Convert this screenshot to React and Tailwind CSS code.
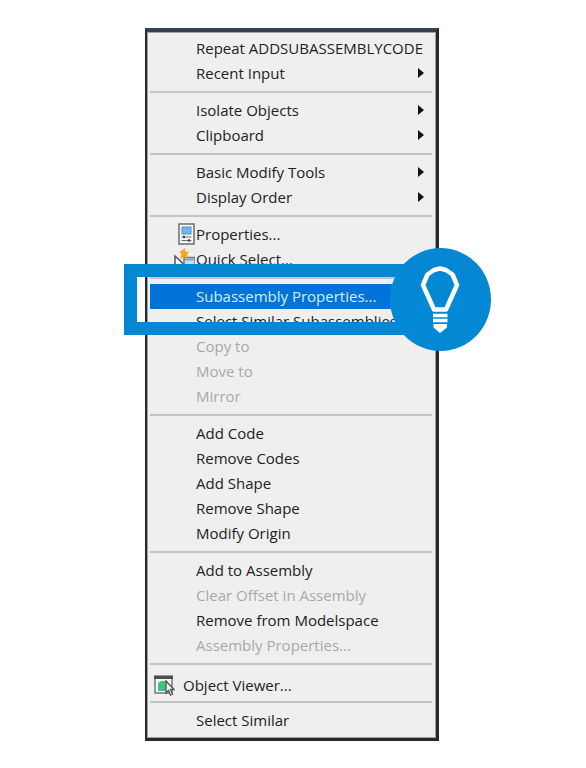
import React from 'react';

const groups = [
  [
    { label: 'Repeat ADDSUBASSEMBLYCODE' },
    { label: 'Recent Input', submenu: true },
  ],
  [
    { label: 'Isolate Objects', submenu: true },
    { label: 'Clipboard', submenu: true },
  ],
  [
    { label: 'Basic Modify Tools', submenu: true },
    { label: 'Display Order', submenu: true },
  ],
  [
    { label: 'Properties...', icon: 'properties' },
    { label: 'Quick Select...', icon: 'quick' },
  ],
  [
    { label: 'Subassembly Properties...', active: true },
    { label: 'Select Similar Subassemblies' },
    { label: 'Copy to', disabled: true },
    { label: 'Move to', disabled: true },
    { label: 'Mirror', disabled: true },
  ],
  [
    { label: 'Add Code' },
    { label: 'Remove Codes' },
    { label: 'Add Shape' },
    { label: 'Remove Shape' },
    { label: 'Modify Origin' },
  ],
  [
    { label: 'Add to Assembly' },
    { label: 'Clear Offset in Assembly', disabled: true },
    { label: 'Remove from Modelspace' },
    { label: 'Assembly Properties...', disabled: true },
  ],
  [{ label: 'Object Viewer...', icon: 'viewer', outdent: true }],
  [{ label: 'Select Similar' }],
];

const PropertiesIcon = () => (
  <svg width="17" height="22" viewBox="0 0 17 22" aria-hidden="true">
    <rect x="1" y="1" width="15" height="20" fill="#f8f8f8" stroke="#6c6c6c" strokeWidth="1.5" />
    <rect x="4" y="4" width="9" height="7" fill="#6db6f2" stroke="#4b8fcb" />
    <path d="M3.5 14h10M3.5 17.5h10" stroke="#666" />
    <path d="M6 12.8v2.4M11 16.3v2.4" stroke="#444" strokeWidth="2" />
  </svg>
);

const QuickSelectIcon = () => (
  <svg width="21" height="22" viewBox="0 0 21 22" aria-hidden="true">
    <path d="M1 20V8l9 8.5-4.5.5" fill="#fff" stroke="#555" strokeWidth="1.5" />
    <rect x="10" y="9.5" width="11" height="11" fill="#c5e0f5" stroke="#777" strokeWidth="1.5" />
    <path d="M11 11.5h9" stroke="#68aee8" strokeWidth="2" />
    <path d="M11 0L5.5 4l2 2.500-1.500 4.500 4-2 4 2-1-4.500 2.500-3-4 .5z" fill="#f8a51b" />
  </svg>
);

const ViewerIcon = () => (
  <svg width="21" height="21" viewBox="0 0 21 21" aria-hidden="true">
    <rect x="1" y="1" width="17" height="17" fill="#f7f7f7" stroke="#777" strokeWidth="1.5" />
    <path d="M0 2.5h19" stroke="#4e4e4e" strokeWidth="3" />
    <path d="M4 8l3-2h5v10H4z" fill="#3fc380" />
    <path d="M12 6v12l2.5-2.5 2 4.5 2-1-2-4.5h3.5z" fill="#f5f5f5" stroke="#555" strokeWidth="1.3" />
  </svg>
);

const icons = {
  properties: <PropertiesIcon />,
  quick: <QuickSelectIcon />,
  viewer: <ViewerIcon />,
};

const MenuItem = ({ item }) => {
  let color = 'text-[#222222]';
  if (item.disabled) color = 'text-[#a8a8a8]';
  if (item.active) color = 'bg-[#0073d9] text-[#d9ecff]';

  return (
    <li role="none">
      <button
        type="button"
        role="menuitem"
        disabled={item.disabled}
        aria-haspopup={item.submenu ? 'menu' : undefined}
        className={`flex w-full items-center text-left whitespace-nowrap ${item.outdent ? 'h-[26px] pt-1' : 'h-[25px] pb-[2px]'} ${color}`}
      >
        <span
          className={`flex shrink-0 items-center justify-end ${item.outdent ? 'w-[33px] pr-2' : 'w-[46px] pr-px'}`}
        >
          {icons[item.icon]}
        </span>
        <span className="flex-1">{item.label}</span>
        {item.submenu && (
          <svg className="mr-2" width="7" height="10" viewBox="0 0 7 10" aria-hidden="true">
            <path d="M1 0l6 5-6 5z" fill="#111" />
          </svg>
        )}
      </button>
    </li>
  );
};

const TipBadge = () => (
  <svg width="101" height="103" viewBox="0 0 101 103" aria-hidden="true">
    <ellipse cx="50.5" cy="51.5" rx="50.5" ry="51.5" fill="#0488d3" />
    <path
      d="M44 61.500L33 37l4.500-10.500 6.500-4.500 6-1.500 6 1.500 6.500 4.500L67 37 56 61.500z"
      fill="none"
      stroke="#fff"
      strokeWidth="4.500"
      strokeLinejoin="round"
    />
    <path d="M43 67.500h14.500M43 72.500h14.500" stroke="#fff" strokeWidth="3.500" />
    <path d="M43.500 76h13.500v3.500L50 85l-6.500-5.500z" fill="#fff" />
  </svg>
);

const App = () => {
  return (
    <main className="flex min-h-screen justify-center bg-white pt-7 pr-[2px] pb-7 font-['Open_Sans',sans-serif] text-[15px] leading-5 font-medium">
      <div className="relative w-[294px]">
        <div className="border-t-4 border-r-3 border-b-3 border-l-2 border-[#25292e] border-t-[#35414d]">
          <div
            role="menu"
            aria-label="Subassembly"
            className="border border-[#a0a0a0] bg-[#f0eff0] pt-[3px] pr-[3px] pb-1 pl-[2px]"
          >
            {groups.map((group, i) => (
              <React.Fragment key={group[0].label}>
                {i > 0 && <hr className="my-[5px] border-t-2 border-[#c4c4c4]" />}
                <ul role="none">
                  {group.map((item) => (
                    <MenuItem key={item.label} item={item} />
                  ))}
                </ul>
              </React.Fragment>
            ))}
          </div>
        </div>

        {/* callout around the highlighted entry */}
        <div className="pointer-events-none absolute top-[236px] -left-[21px] h-[71px] w-[300px] border-[13px] border-[#0488d3]" />
        <div className="pointer-events-none absolute top-[220px] left-[245px]">
          <TipBadge />
        </div>
      </div>
    </main>
  );
};

export default App;
